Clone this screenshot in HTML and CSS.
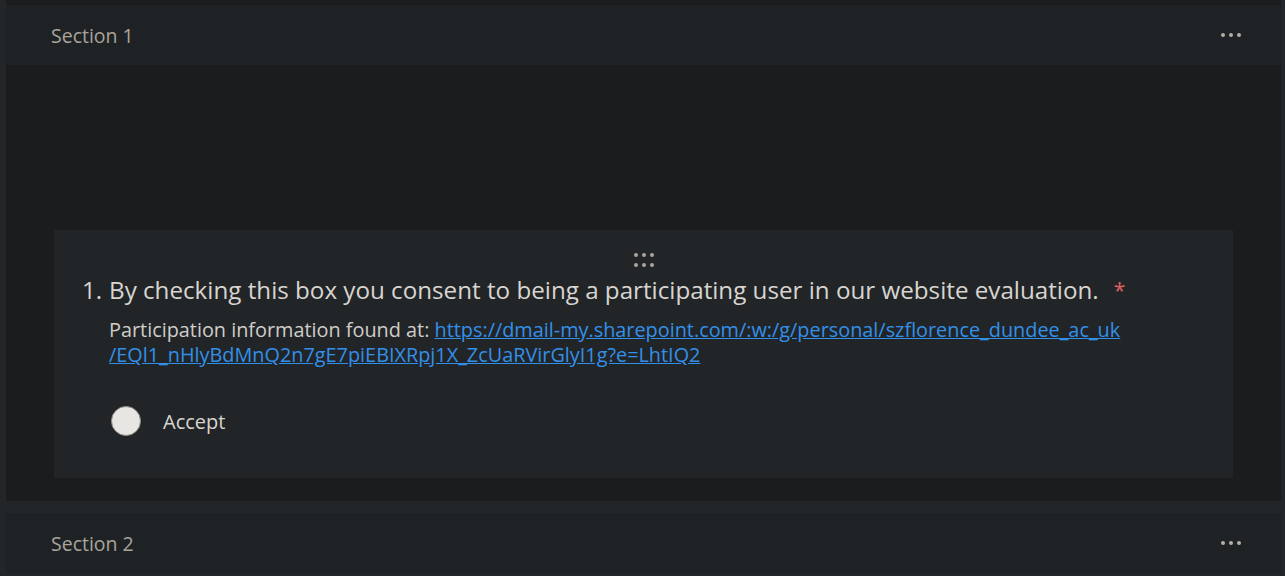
FILE: index.html
```html
<!DOCTYPE html>
<html>
<head>
<meta charset="utf-8">
<link rel="stylesheet" href="styles.css">
</head>
<body>
<div class="page">
  <section class="section first">
    <div class="section-head">
      <span class="section-title">Section 1</span>
      <span class="more"><i></i><i></i><i></i></span>
    </div>
    <div class="section-body">
      <div class="card">
        <div class="handle"><span></span><span></span><span></span><span></span><span></span><span></span></div>
        <div class="q-title"><span class="q-num">1.</span><span class="q-text">By checking this box you consent to being a participating user in our website evaluation.</span><span class="req">*</span></div>
        <div class="q-sub">Participation information found at: <a href="#">https://dmail-my.sharepoint.com/:w:/g/personal/szflorence_dundee_ac_uk<br>/EQl1_nHlyBdMnQ2n7gE7piEBIXRpj1X_ZcUaRVirGlyI1g?e=LhtIQ2</a></div>
        <label class="option"><span class="radio"></span><span class="opt-text">Accept</span></label>
      </div>
    </div>
  </section>
  <section class="section">
    <div class="section-head">
      <span class="section-title">Section 2</span>
      <span class="more"><i></i><i></i><i></i></span>
    </div>
  </section>
</div>
</body>
</html>
```

FILE: styles.css
```css
html, body {
  margin: 0;
  padding: 0;
  background: #232628;
  height: 100%;
  overflow: hidden;
}
body {
  font-family: "Open Sans", "Noto Sans", sans-serif;
}
.page {
  padding: 0 4px 0 6px;
  display: flex;
  flex-direction: column;
  gap: 12px;
}
.section {
  background: #1b1c1e;
}
.section.first {
  padding-top: 5px;
}
.section-head {
  height: 60px;
  background: #1f2224;
  display: flex;
  align-items: center;
  justify-content: space-between;
  padding: 0 40px 0 45px;
}
.section-title {
  color: #a9a49c;
  font-size: 19.5px;
  margin-top: 1px;
}
.more {
  display: flex;
  gap: 4px;
  margin-top: 0;
}
.more i {
  width: 4px;
  height: 4px;
  border-radius: 50%;
  background: #b3aea6;
}
.section-body {
  padding: 165px 48px 23px 48px;
}
.card {
  background: #222528;
  padding: 23px 28px 42px 28px;
}
.handle {
  width: 20px;
  margin: 0 auto;
  display: grid;
  grid-template-columns: repeat(3, 4px);
  gap: 6px 4px;
  justify-content: center;
}
.handle span {
  width: 4px;
  height: 4px;
  border-radius: 50%;
  background: #a9a49c;
}
.q-title {
  margin-top: 7px;
  color: #d8d5d0;
  font-size: 24.2px;
  line-height: 32px;
  display: flex;
}
.q-num {
  width: 27px;
}
.req {
  color: #e06060;
  margin-left: 15px;
  font-size: 21px;
}
.q-sub {
  margin-top: 11px;
  padding-left: 27px;
  color: #d0cdc8;
  font-size: 19.85px;
  line-height: 25px;
}
.q-sub a {
  color: #3390e8;
}
.option {
  display: flex;
  align-items: center;
  margin-top: 39px;
  padding-left: 29px;
}
.radio {
  width: 30px;
  height: 30px;
  box-sizing: border-box;
  border-radius: 50%;
  background: #e8e6e3;
  border: 1px solid #8f8a84;
}
.opt-text {
  margin-left: 22px;
  color: #d8d5d0;
  font-size: 20px;
}
```
